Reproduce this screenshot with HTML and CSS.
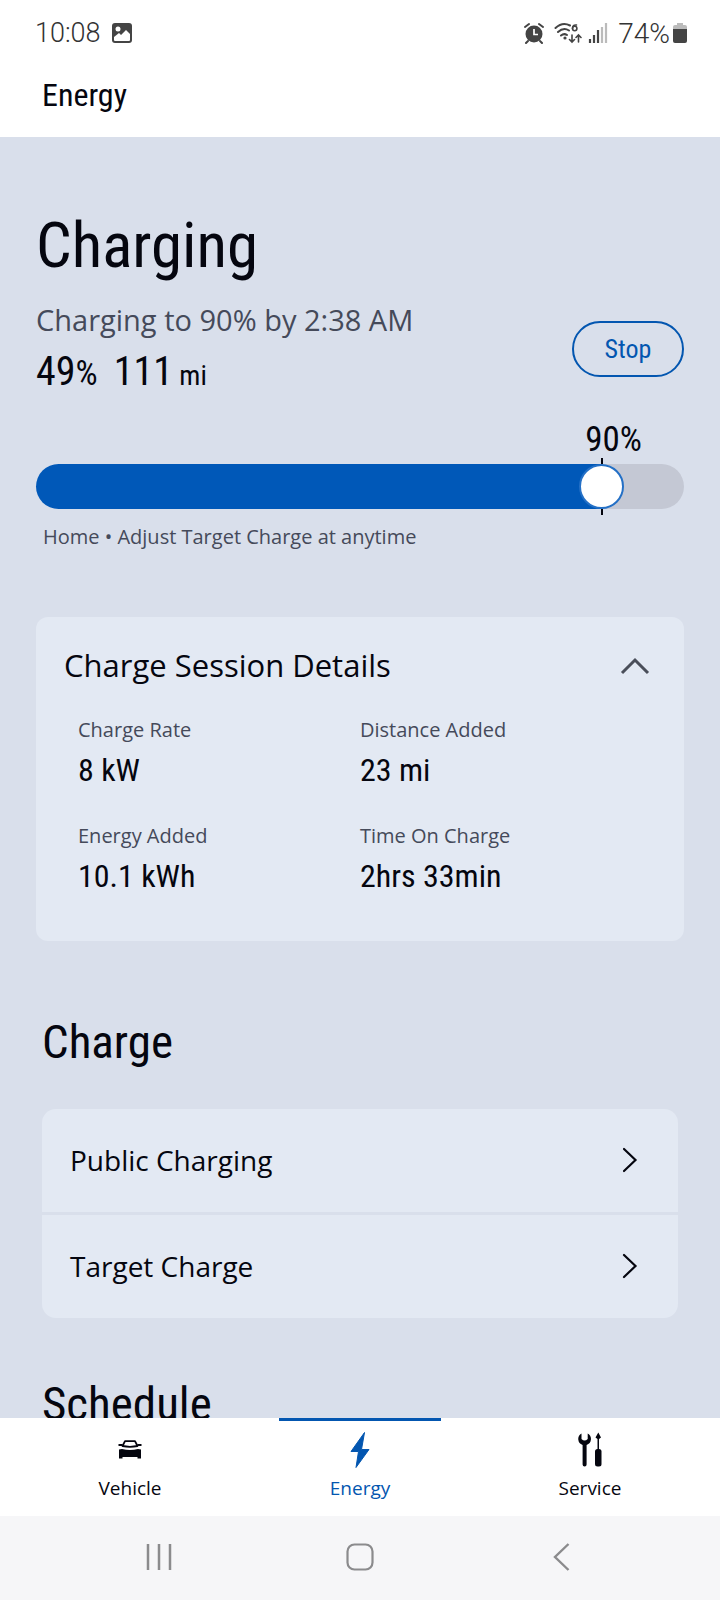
FILE: index.html
```html
<!DOCTYPE html>
<html lang="en">
<head>
<meta charset="utf-8">
<meta name="viewport" content="width=device-width, initial-scale=1">
<title>Energy</title>
<link rel="stylesheet" href="styles.css">
</head>
<body>
<div class="app">
  <div class="status-bar">
    <div class="status-group status-time">
      <span>10:08</span>
      <svg width="22" height="22" viewBox="0 0 22 22" aria-hidden="true"><rect x="1" y="1" width="20" height="20" rx="3" fill="#444"/><circle cx="7" cy="7" r="2.5" fill="#fff"/><path d="M3 15l5-4 2 2 5-5 4 4v6q0 1-1 1H4q-1 0-1-1z" fill="#fff"/></svg>
    </div>
    <div class="status-group">
      <svg width="20" height="22" viewBox="0 0 20 22" aria-hidden="true"><circle cx="10" cy="12" r="8.5" fill="#444"/><path d="M1 5l4-3M19 5l-4-3M4 19l-2 2M16 19l2 2" stroke="#444" stroke-width="2" stroke-linecap="round"/><path d="M10 7v5.500h4" fill="none" stroke="#fff" stroke-width="1.700"/></svg>
      <svg class="wifi" width="28" height="22" viewBox="0 0 28 22" aria-hidden="true"><g fill="none" stroke="#444" stroke-width="2" stroke-linecap="round"><path d="M1.500 6Q8.500-.5 16 3.500M4 10Q9.500 5 15 8.500M7 13.500q3-2.500 6-.5"/><path d="M22.500 3q-4-.5-4 3.500" stroke-width="1.600"/><circle cx="20.700" cy="6.500" r="2.200" stroke-width="1.600"/><path d="M18 13v7m-2.500-2.500L18 20l2.500-2.500M24.500 20v-7M22 15.500l2.500-2.500 2.500 2.500" stroke-width="1.600"/></g><circle cx="11" cy="16" r="1.600" fill="#444"/></svg>
      <svg width="20" height="22" viewBox="0 0 20 22" aria-hidden="true"><path d="M2 17v4M6 13v8M10 8v13" stroke="#444" stroke-width="2.200"/><path d="M14 5v16M18 1v20" stroke="#bbb" stroke-width="2.200"/></svg>
      <span class="battery">74%<svg width="14" height="22" viewBox="0 0 14 22" aria-hidden="true"><path d="M0 8V5q0-2 2-2h2V1h6v2h2q2 0 2 2v3z" fill="#bbb"/><path d="M0 7h14v12q0 2-2 2H2q-2 0-2-2z" fill="#444"/></svg></span>
    </div>
  </div>

  <header class="app-header">
    <h1 class="app-title">Energy</h1>
  </header>

  <main class="content">
    <section class="charging">
      <h2 class="charging-title">Charging</h2>
      <div class="summary">
        <div>
          <p class="summary-text">Charging to 90% by 2:38 AM</p>
          <p class="summary-level"><span>49<small class="unit">%</small></span><span>111<small class="unit unit-distance"> mi</small></span></p>
        </div>
        <button class="stop-button" type="button">Stop</button>
      </div>
      <output class="target-value" for="target">90%</output>
      <div class="slider">
        <input class="slider-input" id="target" type="range" min="0" max="100" value="90" aria-label="Target charge">
      </div>
      <p class="hint">Home • Adjust Target Charge at anytime</p>
    </section>

    <section class="details">
      <button class="details-toggle" type="button" aria-expanded="true">
        <span>Charge Session Details</span>
        <svg width="30" height="20" viewBox="0 0 30 20" aria-hidden="true"><path d="M2 18L15 5l13 13" fill="none" stroke="#4a4e59" stroke-width="3"/></svg>
      </button>
      <dl class="stats">
        <div><dt class="stat-label">Charge Rate</dt><dd class="stat-value">8 kW</dd></div>
        <div><dt class="stat-label">Distance Added</dt><dd class="stat-value">23 mi</dd></div>
        <div><dt class="stat-label">Energy Added</dt><dd class="stat-value">10.1 kWh</dd></div>
        <div><dt class="stat-label">Time On Charge</dt><dd class="stat-value">2hrs 33min</dd></div>
      </dl>
    </section>

    <section class="group">
      <h2 class="group-title">Charge</h2>
      <div class="list">
        <a class="list-item" href="#public"><span>Public Charging</span><svg width="16" height="26" viewBox="0 0 16 26" aria-hidden="true"><path d="M2 2l11.500 11L2 24" fill="none" stroke="#05060f" stroke-width="2.200" stroke-linecap="round"/></svg></a>
        <a class="list-item" href="#target-charge"><span>Target Charge</span><svg width="16" height="26" viewBox="0 0 16 26" aria-hidden="true"><path d="M2 2l11.500 11L2 24" fill="none" stroke="#05060f" stroke-width="2.200" stroke-linecap="round"/></svg></a>
      </div>
    </section>

    <section class="group group-next">
      <h2 class="group-title">Schedule</h2>
    </section>
  </main>

  <nav class="tabs" aria-label="Main">
    <a class="tab" href="#vehicle">
      <svg width="24" height="36" viewBox="0 0 24 36" aria-hidden="true"><path d="M4.500 14L7 9.200h10l2.500 4.800q-7.500 1.600-15 0z" fill="none" stroke="#05060f" stroke-width="1.800" stroke-linejoin="round"/><path d="M.5 13h4M19.500 13h4" stroke="#05060f" stroke-width="1.800"/><path d="M1 17.500l3-.5q8 2 16 0l3 .5V26.500h-3.500v-1.500h-15v1.500H1z" fill="#05060f"/></svg>
      <span>Vehicle</span>
    </a>
    <a class="tab tab-active" href="#energy" aria-current="page">
      <svg width="24" height="36" viewBox="0 0 24 36" aria-hidden="true"><path d="M16.500.5L3 19.500h7.500L8 35.500l13-18h-7.500z" fill="#0356b0" stroke="#0356b0" stroke-linejoin="round"/></svg>
      <span>Energy</span>
    </a>
    <a class="tab" href="#service">
      <svg width="24" height="36" viewBox="0 0 24 36" aria-hidden="true"><path d="M3.500 1.500A6.300 6.300 0 0 0 4.600 13v19.500q0 2 2 2t2-2V13A6.300 6.300 0 0 0 9.700 1.500V7Q6.600 10 3.500 7z" fill="#05060f"/><path d="M20.300.5l2.700 5-2 1.500V17h-1.500V7l-2-1.500z" fill="#05060f"/><rect x="17" y="17" width="6.500" height="17.500" rx="2.500" fill="#05060f"/></svg>
      <span>Service</span>
    </a>
  </nav>

  <div class="system-bar">
    <button class="system-button" type="button" aria-label="Recent apps"><svg width="28" height="28" viewBox="0 0 28 28" aria-hidden="true"><path d="M3 1v26M14 1v26M25 1v26" stroke="#8b8b8d" stroke-width="2.500"/></svg></button>
    <button class="system-button" type="button" aria-label="Home"><svg width="28" height="28" viewBox="0 0 28 28" aria-hidden="true"><rect x="1.500" y="1.500" width="25" height="25" rx="7" fill="none" stroke="#8b8b8d" stroke-width="2.200"/></svg></button>
    <button class="system-button" type="button" aria-label="Back"><svg width="28" height="28" viewBox="0 0 28 28" aria-hidden="true"><path d="M21.500 1L8 14l13.500 13" fill="none" stroke="#8b8b8d" stroke-width="2.400"/></svg></button>
  </div>
</div>
</body>
</html>
```

FILE: styles.css
```css
:root {
  --ink: #05060f;
  --muted: #454a5a;
  --blue: #0356b0;
  --text: "Open Sans", "Noto Sans", sans-serif;
  --narrow: "Roboto Condensed", "Roboto", sans-serif;
}

* {
  box-sizing: border-box;
}

body,
h1,
h2,
p,
dl,
dd {
  margin: 0;
}

h1,
h2 {
  font-weight: 400;
}

button {
  border: 0;
  padding: 0;
  background: none;
  font: inherit;
  color: inherit;
  cursor: pointer;
}

a {
  color: inherit;
  text-decoration: none;
}

svg {
  display: block;
  flex: none;
}

body {
  font-family: var(--text);
  color: var(--ink);
}

.app {
  display: flex;
  flex-direction: column;
  height: 100vh;
  background: #fff;
}

.status-bar {
  display: flex;
  justify-content: space-between;
  align-items: center;
  flex: none;
  height: 66px;
  padding: 0 33px 0 35px;
  font-family: "Roboto", sans-serif;
  font-size: 27px;
  font-weight: 300;
  color: #333;
}

.status-group {
  display: flex;
  align-items: center;
  gap: 10px;
}

.status-group .wifi {
  margin-right: -4px;
}

.battery {
  display: flex;
  align-items: center;
  gap: 3px;
  font-size: 28px;
}

.app-header {
  flex: none;
  height: 71px;
  padding: 9px 42px;
}

.app-title {
  font-family: var(--narrow);
  font-size: 32px;
  line-height: 40px;
}

.content {
  flex: 1;
  min-height: 0;
  overflow: hidden;
  padding: 73px 36px 0;
  background: #d9dfeb;
}

.charging-title {
  font-family: var(--narrow);
  font-size: 63px;
  line-height: 72px;
}

.summary {
  display: flex;
  justify-content: space-between;
  align-items: center;
  margin: 20px 0 26px;
}

.summary-text {
  font-size: 29px;
  line-height: 36px;
  color: var(--muted);
}

.summary-level {
  display: flex;
  gap: 16px;
  margin-top: 10px;
  font-family: var(--narrow);
  font-size: 40px;
  line-height: 48px;
}

.unit {
  font-size: 35px;
  line-height: 1;
}

.unit-distance {
  font-size: 28px;
}

.stop-button {
  width: 112px;
  height: 56px;
  border: 2px solid var(--blue);
  border-radius: 28px;
  font-family: var(--narrow);
  font-size: 26px;
  color: var(--blue);
}

.target-value {
  display: block;
  padding-right: 42px;
  font-family: var(--narrow);
  font-size: 35px;
  line-height: 36px;
  text-align: right;
}

.slider {
  --thumb: 45px;
  --value: calc(22px + (100% - var(--thumb)) * 0.9);
  position: relative;
  padding: 6px 0;
}

.slider::before {
  content: "";
  position: absolute;
  top: 0;
  bottom: 0;
  left: var(--value);
  width: 2px;
  background: var(--ink);
}

.slider-input {
  position: relative;
  display: block;
  width: 100%;
  height: var(--thumb);
  margin: 0;
  border-radius: 23px;
  appearance: none;
  background: linear-gradient(to right, #0058b8 var(--value), #c4c8d4 var(--value));
}

.slider-input::-webkit-slider-thumb {
  appearance: none;
  width: 45px;
  height: 45px;
  border: 2px solid #2470c6;
  border-radius: 50%;
  background: #fff;
}

.hint {
  margin-top: 8px;
  padding-left: 7px;
  font-size: 20px;
  line-height: 28px;
  color: var(--muted);
}

.details {
  margin-top: 66px;
  padding: 28px 34px 45px 28px;
  border-radius: 12px;
  background: #e3e9f3;
}

.details-toggle {
  display: flex;
  justify-content: space-between;
  align-items: center;
  width: 100%;
  font-size: 31px;
  line-height: 40px;
}

.stats {
  display: grid;
  grid-template-columns: 1fr 1fr;
  gap: 32px 0;
  margin-top: 31px;
  padding: 0 8px 0 14px;
}

.stat-label {
  font-size: 20px;
  line-height: 28px;
  color: var(--muted);
}

.stat-value {
  margin-top: 6px;
  font-family: var(--narrow);
  font-size: 32px;
  line-height: 40px;
}

.group {
  margin-top: 73px;
  padding: 0 6px;
}

.group-next {
  margin-top: 58px;
}

.group-title {
  font-family: var(--narrow);
  font-size: 47px;
  line-height: 56px;
}

.list {
  display: grid;
  gap: 3px;
  margin-top: 39px;
  border-radius: 14px;
  overflow: hidden;
}

.list-item {
  display: flex;
  justify-content: space-between;
  align-items: center;
  height: 103px;
  padding: 0 40px 2px 28px;
  background: #e3e9f3;
  font-size: 28px;
  line-height: 36px;
}

.tabs {
  display: flex;
  justify-content: space-between;
  flex: none;
  height: 98px;
  padding: 0 49px;
  background: #fff;
}

.tab {
  display: flex;
  flex-direction: column;
  align-items: center;
  width: 162px;
  padding-top: 11px;
  border-top: 3px solid transparent;
  font-size: 19px;
  line-height: 24px;
  gap: 8px;
}

.tab-active {
  border-top-color: var(--blue);
  color: var(--blue);
}

.system-bar {
  display: flex;
  justify-content: center;
  align-items: center;
  gap: 173px;
  flex: none;
  height: 84px;
  padding-bottom: 2px;
  background: #f6f6f8;
}
```
